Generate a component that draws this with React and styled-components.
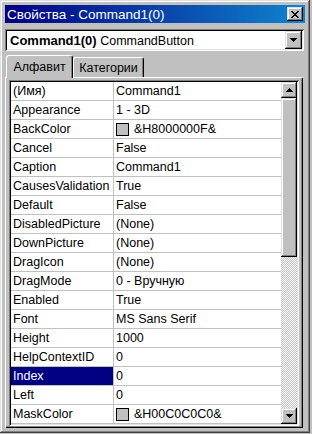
import React from 'react';
import styled, { createGlobalStyle, css } from 'styled-components';

const Global = createGlobalStyle`
  html, body { margin: 0; padding: 0; background: #c0c0c0; }
  body { font-family: "Liberation Sans", Arial, sans-serif; color: #000; }
`;

const raised = css`
  box-shadow: inset -1px -1px #000, inset 1px 1px #dfdfdf, inset -2px -2px #808080, inset 2px 2px #fff;
`;
const sunken = css`
  box-shadow: inset 1px 1px #808080, inset -1px -1px #fff, inset 2px 2px #000, inset -2px -2px #dfdfdf;
`;

const Window = styled.div`
  width: 310px;
  height: 433px;
  box-sizing: border-box;
  padding: 5px;
  background: #c0c0c0;
  box-shadow: inset -1px -1px #404040, inset 1px 1px #dfdfdf, inset -2px -2px #808080, inset 2px 2px #fff;
  display: flex;
  flex-direction: column;
`;

const TitleBar = styled.div`
  height: 18px;
  flex: none;
  display: flex;
  align-items: center;
  justify-content: space-between;
  padding: 0 2px;
  background: linear-gradient(to right, #000080, #1084d0);
`;

const Title = styled.span`
  color: #fff;
  font-size: 13.5px;
  white-space: nowrap;
`;

const CloseBtn = styled.div`
  width: 16px;
  height: 14px;
  ${raised};
  background: #c0c0c0;
  display: flex;
  align-items: center;
  justify-content: center;
`;

const Combo = styled.div`
  margin: 6px 1px 0 0;
  height: 22px;
  flex: none;
  box-sizing: border-box;
  padding: 2px;
  background: #fff;
  ${sunken};
  display: flex;
  align-items: center;
`;

const ComboText = styled.div`
  flex: 1;
  padding-left: 3px;
  font-size: 12.5px;
  white-space: nowrap;
  b { font-size: 13px; }
`;

const DropBtn = styled.div`
  width: 17px;
  height: 18px;
  background: #c0c0c0;
  ${raised};
  display: flex;
  align-items: center;
  justify-content: center;
`;

const Tabs = styled.div`
  margin-top: 4px;
  height: 22px;
  flex: none;
  display: flex;
  align-items: flex-end;
  padding-left: 1px;
  position: relative;
  z-index: 1;
`;

const Tab = styled.div`
  box-sizing: border-box;
  width: ${p => p.$w}px;
  height: ${p => (p.$active ? 23 : 20)}px;
  margin-bottom: ${p => (p.$active ? -1 : 0)}px;
  background: #c0c0c0;
  border-left: 1px solid #fff;
  border-top: 1px solid #fff;
  border-right: 1px solid #000;
  border-radius: 3px 3px 0 0;
  box-shadow: inset -1px 0 #808080;
  display: flex;
  align-items: center;
  justify-content: center;
  padding-bottom: ${p => (p.$active ? 1 : 0)}px;
  font-size: 12.5px;
  white-space: nowrap;
`;

const Panel = styled.div`
  flex: 1;
  min-height: 0;
  margin-right: 2px;
  box-sizing: border-box;
  padding: 3px 4px 2px 4px;
  box-shadow: inset 1px 1px #fff, inset -1px -1px #000, inset -2px -2px #808080;
  display: flex;
`;

const GridBox = styled.div`
  flex: 1;
  min-width: 0;
  padding: 2px;
  ${sunken};
  background: #fff;
  display: flex;
  overflow: hidden;
`;

const Grid = styled.div`
  flex: 1;
  min-width: 0;
  display: flex;
  flex-direction: column;
  overflow: hidden;
`;

const Row = styled.div`
  display: grid;
  grid-template-columns: 102px 1fr;
  column-gap: 1px;
  padding-bottom: 1px;
  background: #c0c0c0;
  flex: none;
`;

const Cell = styled.div`
  height: 18px;
  line-height: 18px;
  padding-left: 2px;
  font-size: 12.5px;
  white-space: nowrap;
  overflow: hidden;
  background: ${p => (p.$sel ? '#000080' : '#fff')};
  color: ${p => (p.$sel ? '#fff' : '#000')};
  display: flex;
  align-items: center;
`;

const Swatch = styled.span`
  width: 13px;
  height: 13px;
  box-sizing: border-box;
  border: 1px solid #000;
  background: #c0c0c0;
  margin-right: 5px;
  flex: none;
`;

const ScrollBar = styled.div`
  width: 16px;
  flex: none;
  display: flex;
  flex-direction: column;
`;

const ScrollBtn = styled.div`
  height: 16px;
  flex: none;
  background: #c0c0c0;
  ${raised};
  display: flex;
  align-items: center;
  justify-content: center;
`;

const Thumb = styled.div`
  height: 159px;
  flex: none;
  background: #c0c0c0;
  ${raised};
`;

const Track = styled.div`
  flex: 1;
  background-color: #fff;
  background-image: repeating-conic-gradient(#c0c0c0 0% 25%, #fff 0% 50%);
  background-size: 2px 2px;
`;

const Arrow = ({ up }) => (
  <svg width="7" height="4" viewBox="0 0 7 4" shapeRendering="crispEdges">
    {up ? (
      <>
        <rect x="3" y="0" width="1" height="1" fill="#000" />
        <rect x="2" y="1" width="3" height="1" fill="#000" />
        <rect x="1" y="2" width="5" height="1" fill="#000" />
        <rect x="0" y="3" width="7" height="1" fill="#000" />
      </>
    ) : (
      <>
        <rect x="0" y="0" width="7" height="1" fill="#000" />
        <rect x="1" y="1" width="5" height="1" fill="#000" />
        <rect x="2" y="2" width="3" height="1" fill="#000" />
        <rect x="3" y="3" width="1" height="1" fill="#000" />
      </>
    )}
  </svg>
);

const CloseIcon = () => (
  <svg width="8" height="7" viewBox="0 0 8 7" shapeRendering="crispEdges">
    <rect x="0" y="0" width="2" height="1" fill="#000" />
    <rect x="6" y="0" width="2" height="1" fill="#000" />
    <rect x="1" y="1" width="2" height="1" fill="#000" />
    <rect x="5" y="1" width="2" height="1" fill="#000" />
    <rect x="2" y="2" width="4" height="1" fill="#000" />
    <rect x="3" y="3" width="2" height="1" fill="#000" />
    <rect x="2" y="4" width="4" height="1" fill="#000" />
    <rect x="1" y="5" width="2" height="1" fill="#000" />
    <rect x="5" y="5" width="2" height="1" fill="#000" />
    <rect x="0" y="6" width="2" height="1" fill="#000" />
    <rect x="6" y="6" width="2" height="1" fill="#000" />
  </svg>
);

const props = [
  ['(Имя)', 'Command1'],
  ['Appearance', '1 - 3D'],
  ['BackColor', '&H8000000F&', true],
  ['Cancel', 'False'],
  ['Caption', 'Command1'],
  ['CausesValidation', 'True'],
  ['Default', 'False'],
  ['DisabledPicture', '(None)'],
  ['DownPicture', '(None)'],
  ['DragIcon', '(None)'],
  ['DragMode', '0 - Вручную'],
  ['Enabled', 'True'],
  ['Font', 'MS Sans Serif'],
  ['Height', '1000'],
  ['HelpContextID', '0'],
  ['Index', '0'],
  ['Left', '0'],
  ['MaskColor', '&H00C0C0C0&', true],
];

export default function App() {
  return (
    <>
      <Global />
      <Window>
        <TitleBar>
          <Title>Свойства - Command1(0)</Title>
          <CloseBtn><CloseIcon /></CloseBtn>
        </TitleBar>
        <Combo>
          <ComboText><b>Command1(0)</b> CommandButton</ComboText>
          <DropBtn><Arrow /></DropBtn>
        </Combo>
        <Tabs>
          <Tab $active $w={67}>Алфавит</Tab>
          <Tab $w={71}>Категории</Tab>
        </Tabs>
        <Panel>
          <GridBox>
            <Grid>
              {props.map(([name, value, swatch]) => (
                <Row key={name}>
                  <Cell $sel={name === 'Index'}>{name}</Cell>
                  <Cell>
                    {swatch && <Swatch />}
                    {value}
                  </Cell>
                </Row>
              ))}
            </Grid>
            <ScrollBar>
              <ScrollBtn><Arrow up /></ScrollBtn>
              <Thumb />
              <Track />
              <ScrollBtn><Arrow /></ScrollBtn>
            </ScrollBar>
          </GridBox>
        </Panel>
      </Window>
    </>
  );
}
